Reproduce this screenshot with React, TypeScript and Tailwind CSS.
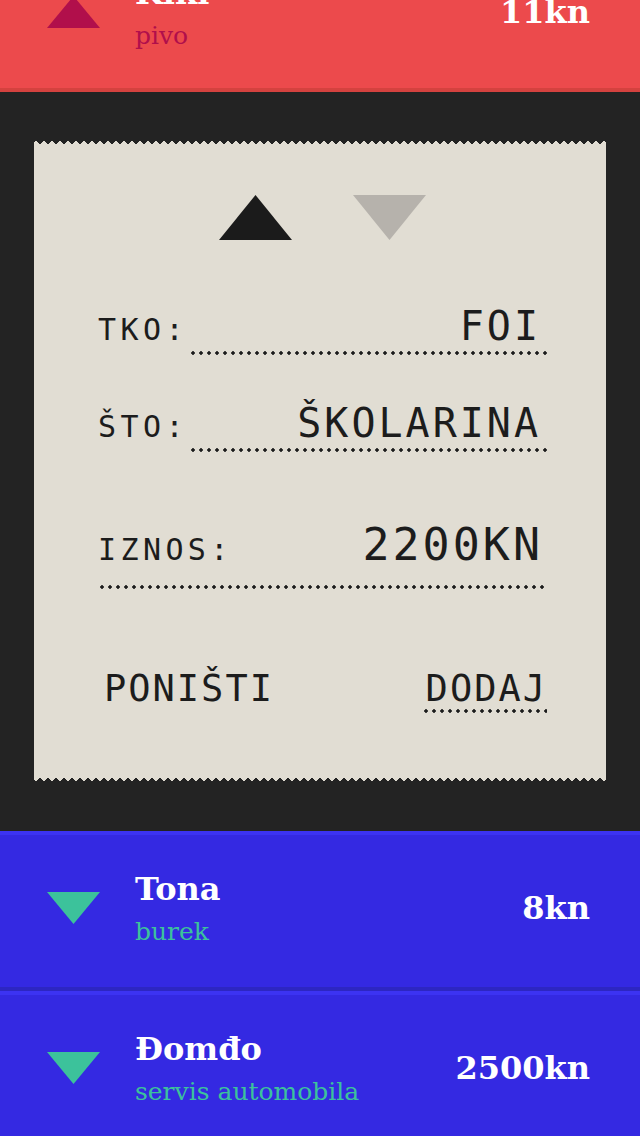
import React from 'react'

type RowProps = { name: string; sub: string; amount: string; up?: boolean; red?: boolean }

function Tri({ up, color }: { up?: boolean; color: string }) {
  return (
    <svg width="53" height="32" viewBox="0 0 53 32" aria-hidden className="shrink-0">
      <polygon points={up ? '26.5,0 53,32 0,32' : '0,0 53,0 26.5,32'} fill={color} />
    </svg>
  )
}

function Row({ name, sub, amount, up, red }: RowProps) {
  const accent = red ? '#b10f4b' : '#3cc29b'
  const pad = red ? 'pt-[4px] pb-[4px]' : 'pb-[6px]'
  return (
    <div
      className={
        red
          ? 'bg-[#ec4a4c] border-b-4 border-b-[#d4423f] -mt-[64px]'
          : 'bg-[#3429e2] border-t-4 border-t-[#3c33f2] border-b-4 border-b-[#2d26c2]'
      }>
      <div className="font-['DejaVu_Serif',serif]">
        <div className={`h-[152px] flex items-center pl-[47px] pr-[50px] ${pad}`}>
          <Tri up={up} color={accent} />
          <div className="ml-[35px] flex-1 min-w-0">
            <div className="text-white font-bold text-[32px] leading-[38px]">{name}</div>
            <div className={red ? 'mt-[9px] text-[#b10f4b] text-[25px] leading-[30px]' : 'mt-[9px] text-[#3cc29b] text-[25px] leading-[30px]'}>{sub}</div>
          </div>
          <div className="text-white font-bold text-[32px] leading-none">{amount}</div>
        </div>
      </div>
    </div>
  )
}

function Dots({ className = '' }: { className?: string }) {
  return (
    <div
      className={`h-[4px] bg-[radial-gradient(circle,#1c1c1c_1.5px,transparent_1.9px)] bg-[length:8px_4px] bg-repeat-x ${className}`}
    />
  )
}

function Field({ label, value }: { label: string; value: string }) {
  return (
    <div className="flex items-baseline gap-[1px]">
      <span className="text-[30px] leading-none tracking-[4.4px]">{label}</span>
      <div className="flex-1">
        <div className="text-right text-[40px] leading-none tracking-[3px] pr-[6px]">{value}</div>
        <Dots className="mt-[5px]" />
      </div>
    </div>
  )
}

export default function App() {
  return (
    <div className="w-[640px] h-[1136px] overflow-hidden bg-[#232323]">
      <Row red up name="Kiki" sub="pivo" amount="11kn" />

      <div className="pt-[48px] pb-[50px] px-[34px]">
        {/* zig-zag paper edges */}
        <div className="h-[6px] bg-[linear-gradient(45deg,#e1ddd3_4px,transparent_0),linear-gradient(-45deg,#e1ddd3_4px,transparent_0)] bg-[length:8px_8px] bg-bottom bg-repeat-x" />
        <div className="bg-[#e1ddd3] pl-[64px] pr-[59px] pt-[49px] pb-[63px] text-[#1c1c1c] font-['DejaVu_Sans_Mono',monospace] uppercase">
          <div className="flex justify-center gap-[61px]">
            <svg width="73" height="45" viewBox="0 0 73 45" aria-hidden>
              <polygon points="36.5,0 73,45 0,45" fill="#1b1b1b" />
            </svg>
            <svg width="73" height="45" viewBox="0 0 73 45" aria-hidden>
              <polygon points="0,0 73,0 36.5,45" fill="#b6b2ac" />
            </svg>
          </div>

          <div className="mt-[66px]">
            <Field label="TKO:" value="FOI" />
          </div>
          <div className="mt-[48px]">
            <Field label="ŠTO:" value="ŠKOLARINA" />
          </div>

          <div className="mt-[70px]">
            <div className="flex items-baseline justify-between">
              <span className="text-[30px] leading-none tracking-[4.4px]">IZNOS:</span>
              <span className="text-[45px] leading-none tracking-[3px] pr-[4px]">2200KN</span>
            </div>
            <Dots className="mt-[18px]" />
          </div>

          <div className="mt-[81px] flex items-start justify-between text-[37px] leading-none tracking-[2px]">
            <span className="ml-[6px]">PONIŠTI</span>
            <div className="w-[125px]">
              <div className="text-right">DODAJ</div>
              <Dots className="mt-[2px]" />
            </div>
          </div>
        </div>
        <div className="h-[5px] bg-[linear-gradient(135deg,#e1ddd3_4px,transparent_0),linear-gradient(-135deg,#e1ddd3_4px,transparent_0)] bg-[length:8px_8px] bg-top bg-repeat-x" />
      </div>

      <Row name="Tona" sub="burek" amount="8kn" />
      <Row name="Đomđo" sub="servis automobila" amount="2500kn" />
    </div>
  )
}
